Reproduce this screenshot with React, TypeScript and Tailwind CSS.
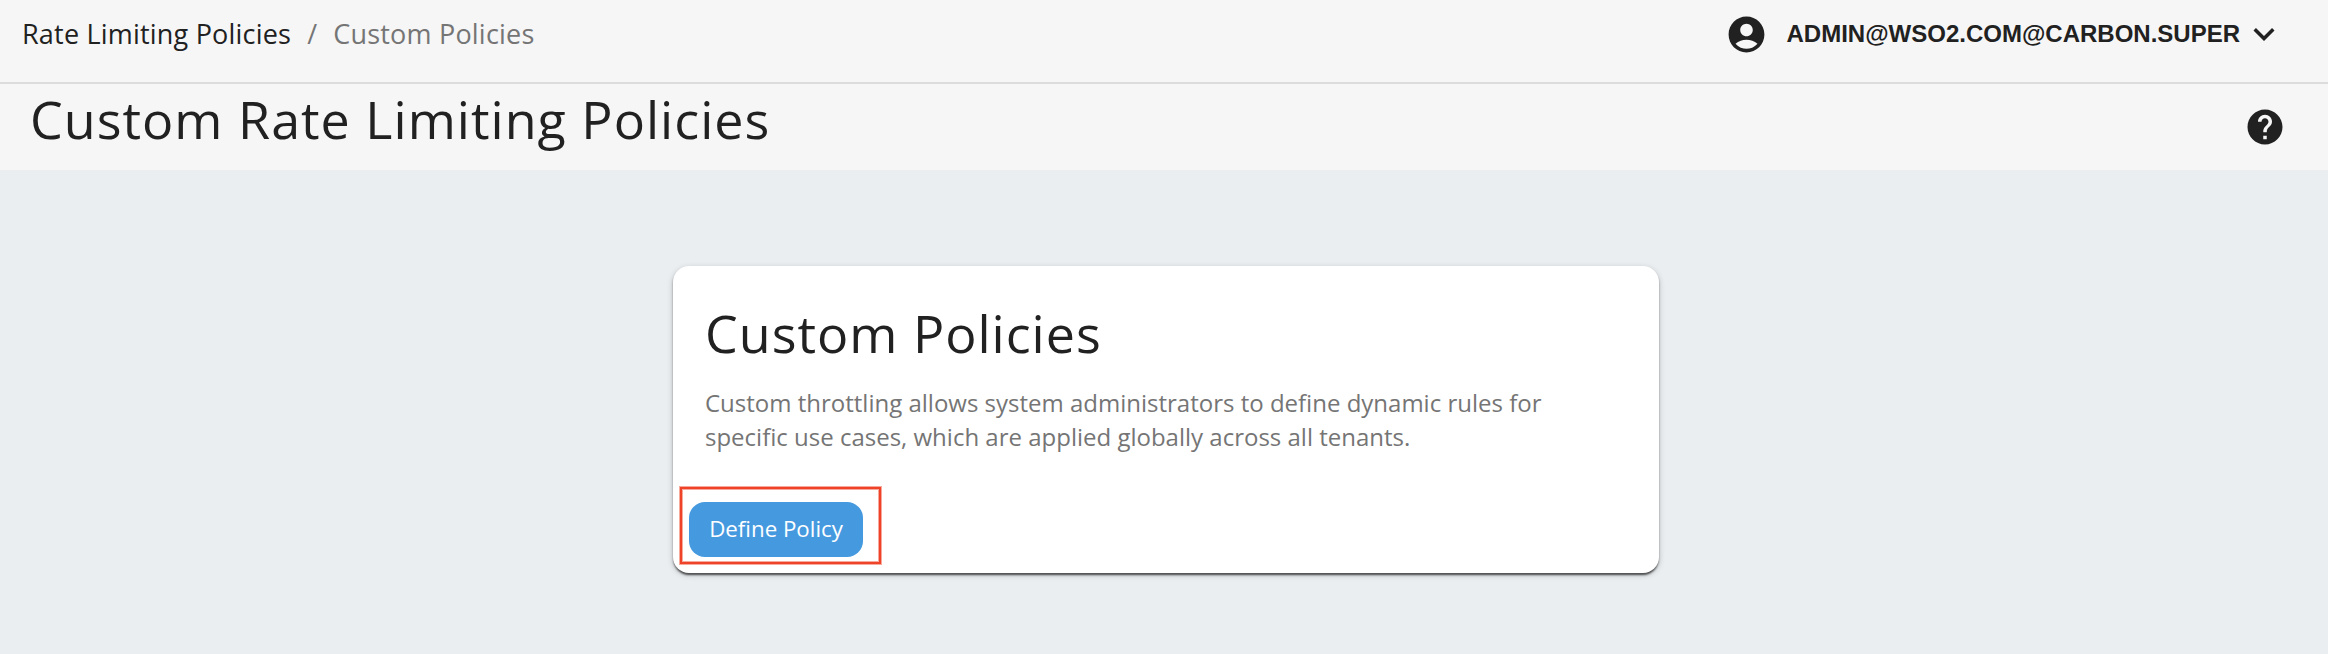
import { MdAccountCircle, MdExpandMore, MdHelp } from "react-icons/md";

function TopBar() {
  return (
    <header className="flex h-[84px] items-start justify-between border-b-2 border-[#dcdcdc] pr-[43px] pl-[22px]">
      <nav className="flex h-[68px] items-center text-[27px] tracking-[0.2px]">
        <a className="text-[#212121]">Rate Limiting Policies</a>
        <span className="mx-4 text-[#757575]">/</span>
        <span className="text-[#757575]">Custom Policies</span>
      </nav>
      <button className="flex h-[68px] items-center font-['Liberation_Sans',sans-serif] text-[24px] font-bold">
        <MdAccountCircle className="mr-[19px] size-[43px]" />
        ADMIN@WSO2.COM@CARBON.SUPER
        <MdExpandMore className="ml-[3px] size-[42px]" />
      </button>
    </header>
  );
}

function TitleBar() {
  return (
    <div className="flex h-[86px] items-center justify-between pr-[42px] pl-[30px]">
      <h1 className="-mt-[16px] text-[52px] leading-[72px] tracking-[1.02px]">Custom Rate Limiting Policies</h1>
      <MdHelp className="size-[42px]" />
    </div>
  );
}

function PolicyCard() {
  return (
    <section className="h-[307px] w-[986px] rounded-[16px] bg-white pt-[31px] shadow-[0_4px_2px_-2px_rgba(0,0,0,0.35),0_2px_2px_rgba(0,0,0,0.4),0_2px_6px_rgba(0,0,0,0.2)]">
      <h2 className="pl-8 text-[52px] leading-[72px] tracking-[1px]">Custom Policies</h2>
      <p className="mt-[17px] pl-8 text-[24px] leading-[34px] text-[#757575]">
        Custom throttling allows system administrators to define dynamic rules for
        <br />
        specific use cases, which are applied globally across all tenants.
      </p>
      <div className="mt-[33px] ml-[7px] h-[77px] w-[201px] border-2 border-[#ee4328] pt-[13px] pl-[7px] shadow-[0_0_0_1px_#f7a99c,inset_0_0_0_1px_#f7a99c]">
        <button className="flex h-[55px] w-[174px] items-center justify-center rounded-[16px] bg-[#4599df] pb-[2px] text-[22.3px] text-white">
          Define Policy
        </button>
      </div>
    </section>
  );
}

export default function App() {
  return (
    <div className="flex h-[654px] flex-col bg-[#f6f6f6] font-['Open_Sans',sans-serif] text-[#212121]">
      <TopBar />
      <TitleBar />
      <main className="flex flex-1 justify-center bg-[#eaeef1] pt-[96px] pl-[4px]">
        <PolicyCard />
      </main>
    </div>
  );
}
